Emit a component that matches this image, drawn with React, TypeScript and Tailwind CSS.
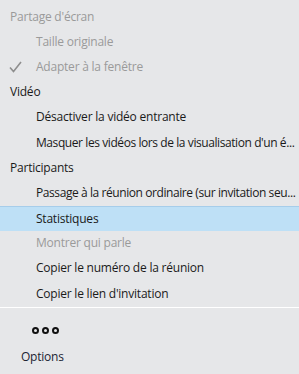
import React from "react";

const font = { fontFamily: '"Open Sans", "Noto Sans", sans-serif' };

type Row = { text: string; kind: "header" | "headerDisabled" | "item" | "disabled" | "checkedDisabled" | "active"; long?: boolean };

const rows: Row[] = [
  { text: "Partage d'écran", kind: "headerDisabled" },
  { text: "Taille originale", kind: "disabled" },
  { text: "Adapter à la fenêtre", kind: "checkedDisabled" },
  { text: "Vidéo", kind: "header" },
  { text: "Désactiver la vidéo entrante", kind: "item" },
  { text: "Masquer les vidéos lors de la visualisation d'un é...", kind: "item", long: true },
  { text: "Participants", kind: "header" },
  { text: "Passage à la réunion ordinaire (sur invitation seu...", kind: "item", long: true },
  { text: "Statistiques", kind: "active" },
  { text: "Montrer qui parle", kind: "disabled" },
  { text: "Copier le numéro de la réunion", kind: "item" },
  { text: "Copier le lien d'invitation", kind: "item" },
];

function MenuRow({ row }: { row: Row }) {
  const isHeader = row.kind === "header" || row.kind === "headerDisabled";
  const gray = row.kind === "headerDisabled" || row.kind === "disabled" || row.kind === "checkedDisabled";
  const bg = row.kind === "active" ? "bg-[#bee0f6] border-t border-[#a6cdea]" : "";
  return (
    <div className={`relative flex h-[25.2px] items-center whitespace-nowrap overflow-hidden ${bg} ${isHeader ? "pl-[10px]" : "pl-[36px]"}`}>
      {row.kind === "checkedDisabled" && (
        <svg className="absolute left-[9px] top-[7px]" width="13" height="12" viewBox="0 0 13 12">
          <path d="M1 6.5 L4.5 10.5 L12 1" fill="none" stroke="#8e8e8e" strokeWidth="1.6" />
        </svg>
      )}
      <span
        className={`text-[12px] leading-none ${row.long ? "tracking-[-0.42px]" : "tracking-[-0.22px]"} ${
          gray ? "text-[#9a9a9a]" : "text-[#1a1a1a]"
        }`}
      >
        {row.text}
      </span>
    </div>
  );
}

export default function App() {
  return (
    <div className="w-[299px] h-[374px] bg-[#e6e7e9] overflow-hidden" style={font}>
      <div className="pt-[4px]">
        {rows.map((r, i) => (
          <MenuRow key={i} row={r} />
        ))}
      </div>
      <div className="mt-[1px] h-[1px] bg-white" />
      <div className="flex items-center gap-[3px] pl-[32px] pt-[19px]">
        <span className="block w-[7px] h-[7px] rounded-full border-2 border-[#111]" />
        <span className="block w-[7px] h-[7px] rounded-full border-2 border-[#111]" />
        <span className="block w-[7px] h-[7px] rounded-full border-2 border-[#111]" />
      </div>
      <div className="pl-[21px] pt-[17px] text-[12px] leading-none tracking-[-0.22px] text-[#1c2433]">Options</div>
    </div>
  );
}
